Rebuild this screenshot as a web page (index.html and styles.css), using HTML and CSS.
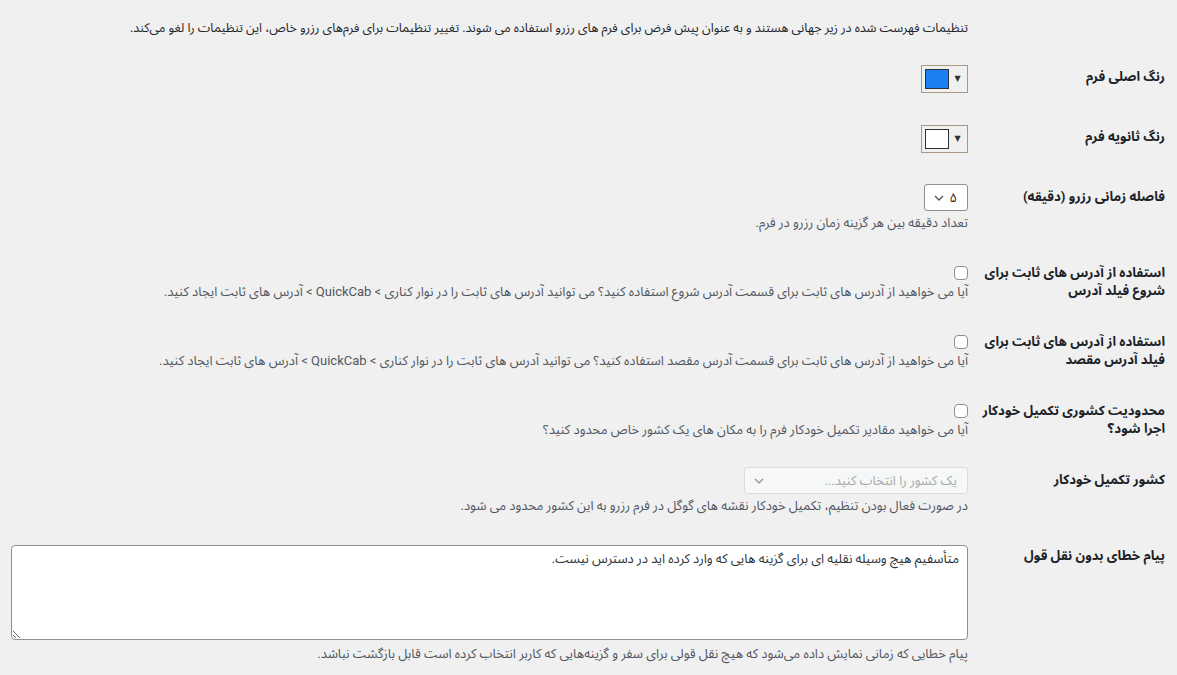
FILE: index.html
```html
<!DOCTYPE html>
<html lang="fa" dir="rtl">
<head>
<meta charset="utf-8">
<title>تنظیمات</title>
<link rel="stylesheet" href="styles.css">
</head>
<body>
<div class="wrap">
  <p class="intro">تنظیمات فهرست شده در زیر جهانی هستند و به عنوان پیش فرض برای فرم های رزرو استفاده می شوند. تغییر تنظیمات برای فرم‌های رزرو خاص، این تنظیمات را لغو می‌کند.</p>

  <div class="row">
    <div class="th">رنگ اصلی فرم</div>
    <div class="td">
      <div class="color-btn"><span class="swatch swatch-blue"></span><span class="tri">▼</span></div>
    </div>
  </div>

  <div class="row">
    <div class="th">رنگ ثانویه فرم</div>
    <div class="td">
      <div class="color-btn"><span class="swatch swatch-white"></span><span class="tri">▼</span></div>
    </div>
  </div>

  <div class="row">
    <div class="th">فاصله زمانی رزرو (دقیقه)</div>
    <div class="td">
      <div class="select select-small"><span class="sel-text">۵</span><svg class="chev" width="10" height="6" viewBox="0 0 10 6"><path d="M1 1l4 4 4-4" fill="none" stroke="#50575e" stroke-width="1.4"/></svg></div>
      <p class="desc">تعداد دقیقه بین هر گزینه زمان رزرو در فرم.</p>
    </div>
  </div>

  <div class="row">
    <div class="th">استفاده از آدرس های ثابت برای شروع فیلد آدرس</div>
    <div class="td">
      <input type="checkbox" class="cb">
      <p class="desc desc-cb">آیا می خواهید از آدرس های ثابت برای قسمت آدرس شروع استفاده کنید؟ می توانید آدرس های ثابت را در نوار کناری &gt; QuickCab &gt; آدرس های ثابت ایجاد کنید.</p>
    </div>
  </div>

  <div class="row">
    <div class="th">استفاده از آدرس های ثابت برای فیلد آدرس مقصد</div>
    <div class="td">
      <input type="checkbox" class="cb">
      <p class="desc desc-cb">آیا می خواهید از آدرس های ثابت برای قسمت آدرس مقصد استفاده کنید؟ می توانید آدرس های ثابت را در نوار کناری &gt; QuickCab &gt; آدرس های ثابت ایجاد کنید.</p>
    </div>
  </div>

  <div class="row">
    <div class="th">محدودیت کشوری تکمیل خودکار اجرا شود؟</div>
    <div class="td">
      <input type="checkbox" class="cb">
      <p class="desc desc-cb">آیا می خواهید مقادیر تکمیل خودکار فرم را به مکان های یک کشور خاص محدود کنید؟</p>
    </div>
  </div>

  <div class="row">
    <div class="th">کشور تکمیل خودکار</div>
    <div class="td">
      <div class="select select-wide"><span class="sel-text placeholder">یک کشور را انتخاب کنید...</span><svg class="chev" width="10" height="6" viewBox="0 0 10 6"><path d="M1 1l4 4 4-4" fill="none" stroke="#8c8f94" stroke-width="1.2"/></svg></div>
      <p class="desc">در صورت فعال بودن تنظیم، تکمیل خودکار نقشه های گوگل در فرم رزرو به این کشور محدود می شود.</p>
    </div>
  </div>

  <div class="row">
    <div class="th">پیام خطای بدون نقل قول</div>
    <div class="td">
      <textarea class="ta">متأسفیم هیچ وسیله نقلیه ای برای گزینه هایی که وارد کرده اید در دسترس نیست.</textarea>
      <p class="desc desc-ta">پیام خطایی که زمانی نمایش داده می‌شود که هیچ نقل قولی برای سفر و گزینه‌هایی که کاربر انتخاب کرده است قابل بازگشت نباشد.</p>
    </div>
  </div>
</div>
</body>
</html>
```
FILE: styles.css
```css
html, body {
  margin: 0;
  padding: 0;
  background: #f0f0f1;
}
body {
  direction: rtl;
  font-family: Roboto, "Noto Sans Arabic", "Vazirmatn", "DejaVu Sans", sans-serif;
  font-size: 13px;
  color: #3c434a;
}
.wrap {
  padding: 0 12px 0 11px;
}
.intro {
  margin: 0;
  padding: 19px 197px 0 0;
  line-height: 18px;
  font-size: 12.6px;
  color: #1d2327;
  height: 29px;
}
.row {
  display: grid;
  grid-template-columns: 197px 1fr;
  align-items: start;
}
.th {
  padding: 20px 0 0 10px;
  font-size: 13.2px;
  font-weight: bold;
  line-height: 18px;
  color: #1d2327;
}
.td {
  padding: 16px 0 12px 0;
  display: flex;
  flex-direction: column;
  align-items: flex-start;
}
.color-btn {
  direction: ltr;
  margin: 1px 0 3px 0;
  width: 42px;
  height: 26px;
  border: 1px solid #a8987f;
  display: flex;
  align-items: center;
  gap: 1px;
  padding: 0 0 0 3px;
  box-sizing: content-box;
}
.swatch {
  width: 22px;
  height: 18px;
  border: 1px solid #2c3338;
  display: block;
}
.swatch-blue { background: #1a7ff0; }
.swatch-white { background: #ffffff; }
.tri {
  font-size: 8px;
  color: #2c3338;
  line-height: 1;
  width: 15px;
  text-align: center;
}
.select {
  box-sizing: border-box;
  height: 27px;
  border: 1px solid #8c8f94;
  border-radius: 3px;
  background: #fff;
  display: flex;
  align-items: center;
  justify-content: space-between;
  padding: 0 10px 0 9px;
}
.select-small { width: 44px; }
.select-wide {
  width: 224px;
  border-color: #dcdcde;
  background: #f6f7f7;
}
.sel-text {
  font-size: 13px;
  color: #1d2327;
  line-height: 1;
}
.placeholder { color: #a7aaad; }
.chev { display: block; }
.desc {
  margin: 3px 0 0 0;
  font-size: 13px;
  line-height: 18px;
  color: #50575e;
}
.cb {
  appearance: none;
  -webkit-appearance: none;
  margin: 6px 0 0 0;
  width: 14px;
  height: 14px;
  box-sizing: border-box;
  border: 1px solid #8c8f94;
  border-radius: 4px;
  background: #fff;
}
.desc-cb { margin-top: 3px; }
.ta {
  box-sizing: border-box;
  margin: 2px 0 0 0;
  width: 100%;
  height: 95px;
  border: 1px solid #8c8f94;
  border-radius: 4px;
  background: #fff;
  padding: 4px 8px;
  font-family: inherit;
  font-size: 13px;
  line-height: 18px;
  color: #2c3338;
  resize: both;
}
.desc-ta { margin-top: 5px; }
```
